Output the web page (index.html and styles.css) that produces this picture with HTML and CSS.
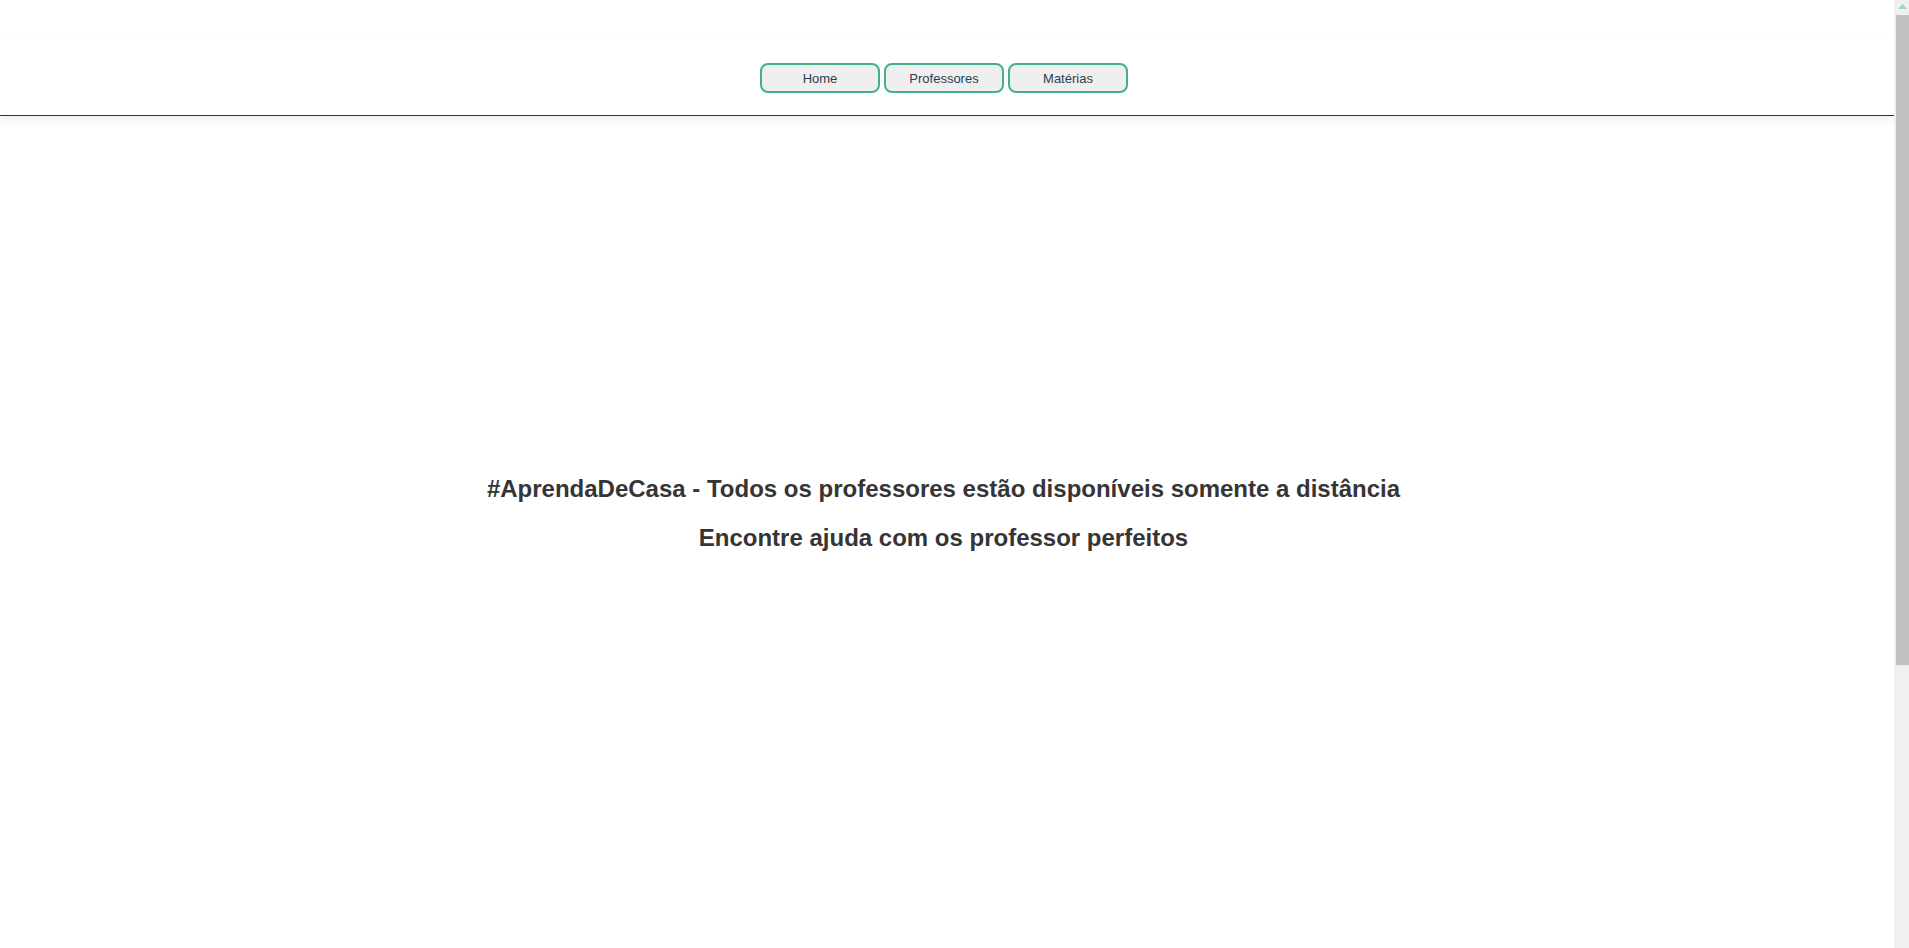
FILE: index.html
```html
<!DOCTYPE html>
<html lang="pt-BR">
<head>
<meta charset="utf-8">
<title>AprendaDeCasa</title>
<link rel="stylesheet" href="styles.css">
</head>
<body>
<div class="janela">
  <div class="pagina">
    <header class="topo">
      <div class="faixa"></div>
      <nav class="menu">
        <button class="botao">Home</button>
        <button class="botao">Professores</button>
        <button class="botao">Matérias</button>
      </nav>
    </header>
    <main class="conteudo">
      <h2 class="titulo">#AprendaDeCasa - Todos os professores estão disponíveis somente a distância</h2>
      <h2 class="titulo">Encontre ajuda com os professor perfeitos</h2>
    </main>
  </div>
  <div class="rolagem" aria-hidden="true">
    <div class="seta">
      <svg width="9" height="5" viewBox="0 0 9 5"><polygon points="4.5,0 9,5 0,5" fill="#9fd6c1"/></svg>
    </div>
    <div class="trilho">
      <div class="polegar"></div>
    </div>
  </div>
</div>
</body>
</html>
```
FILE: styles.css
```css
html {
  background: #ffffff;
}
body {
  margin: 0;
  font-family: "Liberation Sans", Arial, sans-serif;
  color: #333333;
  background: #ffffff;
  overflow: hidden;
}
.janela {
  display: flex;
  height: 100vh;
}
.pagina {
  flex: 1;
  min-width: 0;
  overflow: hidden;
}
.topo {
  height: 115px;
  border-bottom: 1px solid #333333;
  box-shadow: 0 3px 10px rgba(0, 0, 0, 0.08);
  display: flex;
  flex-direction: column;
}
.faixa {
  height: 39px;
  border-bottom: 1px solid #fafafa;
}
.menu {
  display: flex;
  justify-content: center;
  gap: 4px;
  padding-top: 23px;
  padding-right: 6px;
}
.botao {
  width: 120px;
  height: 30px;
  border: 2px solid #42b08c;
  border-radius: 8px;
  background: #efefef;
  color: #2c3e50;
  font-family: "Liberation Sans", Arial, sans-serif;
  font-size: 13px;
  padding: 0;
}
.conteudo {
  display: flex;
  flex-direction: column;
  align-items: center;
  padding-top: 359px;
  padding-right: 7px;
}
.titulo {
  margin: 0 0 21px 0;
  font-size: 24px;
  font-weight: bold;
  color: #353535;
}
.rolagem {
  width: 15px;
  flex: none;
  background: #f0f0f0;
  display: flex;
  flex-direction: column;
}
.seta {
  height: 15px;
  display: flex;
  justify-content: center;
  align-items: center;
  padding-left: 2px;
}
.seta svg {
  display: block;
  margin-top: -2px;
}
.trilho {
  flex: 1;
  padding-left: 2px;
}
.polegar {
  height: 650px;
  background: #c1c1c1;
}
```
